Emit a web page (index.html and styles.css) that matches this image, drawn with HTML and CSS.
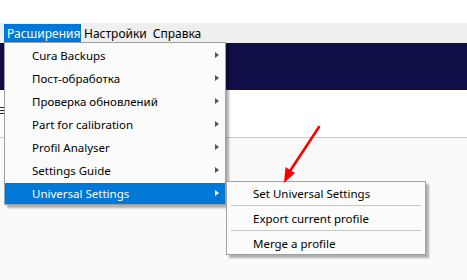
FILE: index.html
```html
<!DOCTYPE html>
<html lang="ru">
<head>
  <meta charset="UTF-8">
  <title>Cura - Расширения</title>
  <link rel="stylesheet" href="styles.css">
</head>
<body>
  <div class="top-space"></div>

  <nav class="menubar">
    <span class="menu-title open">Расширения</span>
    <span class="menu-title">Настройки</span>
    <span class="menu-title">Справка</span>
  </nav>

  <div class="window">
    <div class="header"></div>
    <div class="toolbar">
      <div class="burger"><i></i><i></i><i></i></div>
    </div>
    <div class="content"></div>
  </div>

  <ul class="dropdown">
    <li>Cura Backups <span class="arrow"></span></li>
    <li>Пост-обработка <span class="arrow"></span></li>
    <li>Проверка обновлений <span class="arrow"></span></li>
    <li>Part for calibration <span class="arrow"></span></li>
    <li>Profil Analyser <span class="arrow"></span></li>
    <li>Settings Guide <span class="arrow"></span></li>
    <li class="active">Universal Settings <span class="arrow"></span></li>
  </ul>

  <ul class="submenu">
    <li>Set Universal Settings</li>
    <li class="sep"></li>
    <li>Export current profile</li>
    <li class="sep"></li>
    <li>Merge a profile</li>
  </ul>

  <svg class="pointer" width="467" height="280" viewBox="0 0 467 280">
    <line x1="319" y1="127" x2="290" y2="171" stroke="#f00" stroke-width="2.6" stroke-linecap="round"/>
    <polygon points="284,183 285.5,167 295,173" fill="#f00"/>
  </svg>
</body>
</html>
```

FILE: styles.css
```css
* { box-sizing: border-box; margin: 0; padding: 0; }
body {
  width: 467px;
  height: 280px;
  overflow: hidden;
  background: #fff;
  font-family: 'Noto Sans', 'Open Sans', sans-serif;
  font-size: 11.5px;
  color: #000;
  position: relative;
}
.top-space { height: 23px; background: #fff; }
.menubar {
  height: 20px;
  background: #efefef;
  display: flex;
  align-items: stretch;
  padding-left: 4px;
  font-size: 12px;
}
.menu-title {
  padding: 0 3px 0 3px;
  line-height: 19px;
  height: 19px;
  margin-top: 1px;
}
.menu-title.open {
  background: #0078d7;
  color: #fff;
  width: 77px;
}
.window { display: flex; flex-direction: column; }
.header {
  height: 47px;
  background: #0f0e47;
}
.toolbar {
  height: 48px;
  background: #fff;
  border-bottom: 1px solid #c9c9c9;
  position: relative;
}
.burger {
  position: absolute;
  left: -2px;
  top: 17px;
  display: flex;
  flex-direction: column;
  gap: 2px;
}
.burger i { display: block; width: 6px; height: 1px; background: #1a2a5a; }
.content { height: 150px; background: #fafafa; }

.dropdown, .submenu {
  position: absolute;
  list-style: none;
  background: #fbfbfb;
  border: 1px solid #a0a0a0;
  box-shadow: 3px 3px 2px rgba(0, 0, 0, 0.3);
}
.dropdown {
  left: 4px;
  top: 42px;
  width: 222px;
  padding: 1px 0 0;
}
.dropdown li {
  height: 23px;
  line-height: 23px;
  padding-left: 27px;
  position: relative;
}
.dropdown li.active {
  height: 21px;
  line-height: 21px;
  margin-top: 1px;
  background: #0078d7;
  color: #fff;
}
.arrow {
  position: absolute;
  right: 6px;
  top: 8px;
  width: 0;
  height: 0;
  border-top: 3.5px solid transparent;
  border-bottom: 3.5px solid transparent;
  border-left: 4px solid #555;
}
.active .arrow { border-left-color: #fff; top: 7px; }

.submenu {
  left: 226px;
  top: 181px;
  width: 200px;
  padding: 1px 0 0;
}
.submenu li {
  height: 21px;
  line-height: 21px;
  padding-left: 26px;
}
.submenu li.sep {
  height: 3px;
  margin: 0 4px;
  border-top: 1px solid #c8c8c8;
  margin-top: 1px;
}
.pointer { position: absolute; left: 0; top: 0; pointer-events: none; }
```
